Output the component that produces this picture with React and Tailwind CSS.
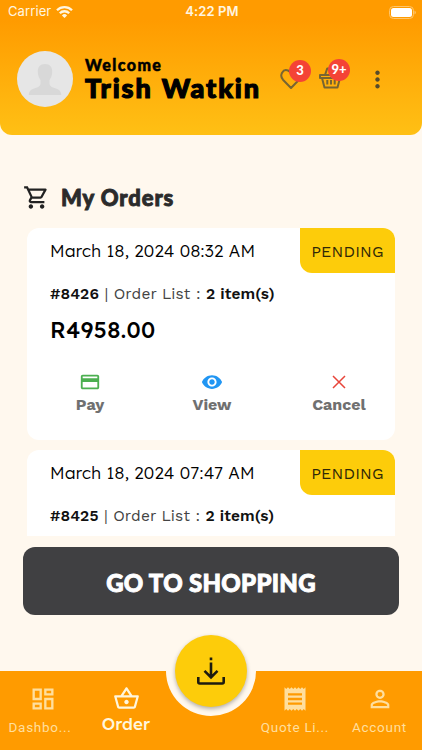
import React from "react";
import {
    MdOutlineShoppingCart,
    MdPayment,
    MdVisibility,
    MdOutlineDashboard,
    MdOutlineShoppingBasket,
    MdReceipt,
    MdPersonOutline,
    MdMoreVert,
} from "react-icons/md";

const orders = [
    { id: "8426", date: "March 18, 2024 08:32 AM", items: 2, total: "R4958.00", status: "PENDING" },
    { id: "8425", date: "March 18, 2024 07:47 AM", items: 2, status: "PENDING" },
];

function StatusBar() {
    return (
        <div className="flex h-6 items-center justify-between pl-2 pr-[6px] text-[#fff6e0] font-['Inter',sans-serif]">
            <div className="flex w-[90px] items-center gap-[5px]">
                <span className="text-[13px] tracking-[0.1px]">Carrier</span>
                <svg width="17" height="12" viewBox="0 0 17 12" fill="none" stroke="currentColor" strokeWidth="2.3">
                    <path d="M1 4.3a10.6 10.6 0 0 1 15 0" />
                    <path d="M3.8 7.2a6.6 6.6 0 0 1 9.4 0" />
                    <path d="M8.5 12L5.9 9.4a3.7 3.7 0 0 1 5.2 0z" fill="currentColor" stroke="none" />
                </svg>
            </div>
            <span className="whitespace-nowrap text-[13px] font-semibold tracking-[0.1px]">4:22 PM</span>
            <div className="flex w-[90px] justify-end">
                <svg width="28" height="13" viewBox="0 0 28 13" fill="none">
                    <rect x="1.5" y="0.5" width="24" height="12" rx="4" stroke="#ffc56a" />
                    <rect x="3" y="2" width="21" height="9" rx="2.5" fill="#fff" />
                    <path d="M26.500 4.500v4q1.300-.6 1.300-2t-1.300-2z" fill="#ffc56a" />
                </svg>
            </div>
        </div>
    );
}

function Badge({ children }) {
    return (
        <span className="absolute left-[9px] top-[-8px] flex size-[22px] items-center justify-center rounded-full bg-[#f44336] text-[13px] font-black text-white font-['Lato',sans-serif]">
            {children}
        </span>
    );
}

function Header() {
    return (
        <header className="h-[135px] rounded-b-xl bg-linear-to-b from-[#ff9b00] from-15% to-[#ffc014]">
            <StatusBar />
            <div className="flex h-[110px] items-center pl-[17px]">
                <svg className="shrink-0" width="56" height="56" viewBox="0 0 56 56">
                    <circle cx="28" cy="28" r="28" fill="#e6e6e6" />
                    <path
                        d="M28 13c-5 0-7.400 3.300-7.200 7.800.1 3.200.8 5.700 2.700 8.200v4.200c-.6 2.400-3.200 3.300-6.500 4.300-3.500 1.100-5 3-5.300 6.500h32.600c-.3-3.500-1.800-5.400-5.300-6.500-3.300-1-5.900-1.900-6.500-4.300V29c1.900-2.500 2.600-5 2.700-8.200C35.400 16.300 33 13 28 13z"
                        fill="#d8d8d8"
                    />
                </svg>
                <div className="ml-3 w-[184px] whitespace-nowrap font-black text-black font-['Lato',sans-serif] [-webkit-text-stroke:0.5px_black]">
                    <div className="text-[16px] leading-[20px] tracking-[1.4px]">Welcome</div>
                    <div className="mt-[-2px] text-[27px] leading-[30px] tracking-[1.9px] [word-spacing:1px] [-webkit-text-stroke:1.2px_black]">Trish Watkin</div>
                </div>
                <div className="relative ml-[11px] size-[22px] text-[#776532]">
                    <svg width="22" height="22" viewBox="0 0 22 22" fill="none" stroke="currentColor" strokeWidth="2">
                        <path d="M11 20L3.200 12C-1.200 7.200 3 .5 8 2.500 9.500 3.100 10.500 4.200 11 5.200 11.500 4.200 12.500 3.100 14 2.500 19 .5 23.200 7.200 18.800 12z" strokeLinejoin="round" />
                    </svg>
                    <Badge>3</Badge>
                </div>
                <div className="relative ml-[17px] size-[24px] text-[#776532]">
                    <svg width="24" height="22" viewBox="0 0 24 22" fill="none" stroke="currentColor" strokeWidth="2" strokeLinejoin="round">
                        <path d="M1 8h22v3H1zM3 11l2.500 9.500h13L21 11M6 8l2.200-6.500h7.600L18 8M8.300 13v4.500M12 13v4.500M15.700 13v4.500" />
                    </svg>
                    <Badge>9+</Badge>
                </div>
                <MdMoreVert className="ml-[21px] size-[27px] text-[#574b2b]" />
            </div>
        </header>
    );
}

function Action({ icon, label }) {
    return (
        <div className="flex w-[80px] flex-col items-center">
            <div className="flex h-[22px] items-center">{icon}</div>
            <span className="text-[16px] font-bold leading-6 text-[#707070] font-['Work_Sans','Inter',sans-serif]">{label}</span>
        </div>
    );
}

function OrderCard({ order }) {
    return (
        <article className="h-[212px] shrink-0 rounded-xl bg-white font-['Work_Sans','Inter',sans-serif]">
            <div className="flex h-[45px] justify-between pl-[23px]">
                <span className="whitespace-nowrap text-[17px] font-light leading-[45px] tracking-[0.3px] text-black font-['Lexend','Inter',sans-serif]">{order.date}</span>
                <span className="flex w-[95px] shrink-0 items-center justify-center rounded-bl-xl rounded-tr-xl bg-[#fdcc0a] pt-[2px] text-[16px] tracking-[0.2px] text-[#302807]">
                    {order.status}
                </span>
            </div>
            <div className="pl-[23px]">
                <p className="mt-[9px] whitespace-nowrap text-[15.5px] leading-6 tracking-[0.12px] text-[#444]">
                    <b className="font-semibold text-[#111]">#{order.id}</b> | Order List : <b className="font-semibold text-[#111]">{order.items} item(s)</b>
                </p>
                {order.total && (
                    <p className="mt-[8px] text-[22.5px] font-medium leading-8 tracking-[0.4px] text-black font-['Lexend','Inter',sans-serif]">{order.total}</p>
                )}
            </div>
            {order.total && (
                <div className="mt-[25px] flex justify-between pl-[23px] pr-[16px]">
                    <Action label="Pay" icon={<MdPayment className="size-[22px] text-[#4caf50]" />} />
                    <div className="mr-[5px]">
                        <Action label="View" icon={<MdVisibility className="size-[22px] text-[#2196f3]" />} />
                    </div>
                    <Action
                        label="Cancel"
                        icon={
                            <svg width="14" height="14" viewBox="0 0 14 14" stroke="#e8453a" strokeWidth="1.5">
                                <path d="M1 1l12 12M13 1L1 13" />
                            </svg>
                        }
                    />
                </div>
            )}
        </article>
    );
}

function NavItem({ icon, label, active }) {
    return (
        <div className={`flex flex-col items-center whitespace-nowrap pt-[14px] ${active ? "text-[#fff6dc]" : "text-[#ffdf9e]"}`}>
            {icon}
            <span
                className={
                    active
                        ? "text-[17px] font-medium leading-6 font-['Lexend','Inter',sans-serif]"
                        : "mt-[2px] text-[13.5px] leading-6 tracking-[0.7px] font-['Roboto',sans-serif]"
                }
            >
                {label}
            </span>
        </div>
    );
}

function BottomNav() {
    return (
        <nav className="relative mt-[56px] h-[79px] bg-[#ff9b00]">
            <div className="grid h-full grid-cols-[80px_92px_78px_90px_79px]">
                <NavItem label="Dashbo..." icon={<MdOutlineDashboard className="ml-[5px] size-[28px]" />} />
                <NavItem active label="Order" icon={<MdOutlineShoppingBasket className="size-[27px]" />} />
                <span />
                <NavItem label="Quote Li..." icon={<MdReceipt className="size-[28px]" />} />
                <NavItem label="Account" icon={<MdPersonOutline className="size-[28px]" />} />
            </div>
            {/* floating download button, sits in the notch */}
            <div className="absolute left-[166px] top-[-45px] flex size-[90px] items-center justify-center rounded-full bg-[#fff8ee]">
                <button className="flex size-[72px] items-center justify-center rounded-full bg-[#fdcc0a] shadow-[0_2px_4px_rgba(0,0,0,0.3)]">
                    <svg width="30" height="30" viewBox="0 0 30 30" fill="none" stroke="#1d1b10" strokeWidth="2.600">
                        <path d="M2.300 21v5q0 1.500 1.500 1.500h22.400q1.500 0 1.500-1.500V21M15 6.500v14.500M8.500 14.800L15 21.300l6.500-6.500M15 1.500v2.800" />
                    </svg>
                </button>
            </div>
        </nav>
    );
}

export default function App() {
    return (
        <div className="h-[750px] w-[422px] overflow-hidden bg-[#fff8ee]">
            <Header />
            <main>
                <div className="flex h-[93px] items-center pl-[23px] pt-[32px]">
                    <MdOutlineShoppingCart className="size-[27px] text-[#222]" />
                    <h1 className="ml-[11px] text-[22px] font-black tracking-[0.9px] text-[#2b2b2b] font-['Lato',sans-serif] [-webkit-text-stroke:0.9px_#2b2b2b]">My Orders</h1>
                </div>
                <div className="ml-[27px] flex h-[308px] w-[368px] flex-col gap-[10px] overflow-hidden">
                    {orders.map((order) => (
                        <OrderCard key={order.id} order={order} />
                    ))}
                </div>
                <button className="ml-[23px] mt-[11px] flex h-[68px] w-[376px] items-center justify-center rounded-xl bg-[#404042] pt-[3px] text-[24px] font-black tracking-[0.3px] text-white font-['Lato',sans-serif] [-webkit-text-stroke:0.9px_white]">
                    GO TO SHOPPING
                </button>
            </main>
            <BottomNav />
        </div>
    );
}
